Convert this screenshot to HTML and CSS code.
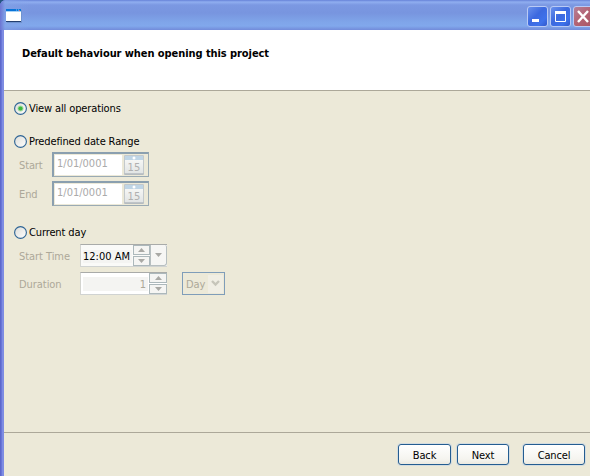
FILE: index.html
```html
<!DOCTYPE html>
<html lang="en">
<head>
<meta charset="utf-8">
<title>Project options</title>
<link rel="stylesheet" href="styles.css">
</head>
<body>
<svg class="defs" width="0" height="0" aria-hidden="true">
  <linearGradient id="dial" x1="0" y1="0" x2="1" y2="1"><stop offset="0" stop-color="#dcdcd7"/><stop offset="1" stop-color="#fff"/></linearGradient>
  <linearGradient id="page" x1="0" y1="0" x2="0" y2="1"><stop offset="0" stop-color="#fcfcfa"/><stop offset="1" stop-color="#e0e3e3"/></linearGradient>
  <symbol id="radio" viewBox="0 0 13 13"><circle cx="6.5" cy="6.5" r="5.9" fill="url(#dial)" stroke="#2f6595" stroke-width="1.15"/></symbol>
  <symbol id="calendar" viewBox="0 0 20 20">
    <path d="M.5.5h19v18.8H.5z" fill="url(#page)" stroke="#c3c9cc"/>
    <path d="M1 1h18v4H1z" fill="#bfd5e6"/><circle cx="10" cy="3" r="1.5" fill="#fff"/>
    <path d="M.5 19h19" stroke="#a2aab0"/>
  </symbol>
  <symbol id="up" viewBox="0 0 7 4"><path d="M0 4 3.5 0 7 4z" fill="#a9a9a5"/></symbol>
  <symbol id="down" viewBox="0 0 7 4"><path d="M0 0h7L3.5 4z" fill="#a9a9a5"/></symbol>
</svg>
<div class="window">
  <header class="titlebar">
    <svg class="app-icon" width="16" height="14" viewBox="0 0 16 14"><path d="M1 1h15v13H1z" fill="#6f93cf"/><path d="M0 0h15v13H0z" fill="#fff"/><path d="M0 0h15v2H0z" fill="#0874d8"/><path d="M0 2h15v1H0z" fill="#a9d2f5"/><path d="M10 1h1M12 1h1" stroke="#8bc5f5"/><path d="M13 1h1v1h-1z" fill="#c96770"/><path d="M0 12h15v1H0z" fill="#233f70"/></svg>
    <div class="controls">
      <span class="control"><svg width="19" height="19"><path d="M4 12h7v3H4z" fill="#fff"/></svg></span>
      <span class="control"><svg width="19" height="19"><path d="M4.5 5.5h10v9h-10z" fill="none" stroke="#fff"/><path d="M4 4h11v3H4z" fill="#fff"/></svg></span>
      <span class="control close"><svg width="19" height="19"><path d="m4 4 10 11M14 4 4 15" stroke="#fff" stroke-width="2.4"/></svg></span>
    </div>
  </header>
  <main class="client">
    <section class="banner"><h1>Default behaviour when opening this project</h1></section>
    <section class="options">
      <label class="choice all"><svg width="13" height="13"><use href="#radio"/><circle cx="6.5" cy="6.5" r="3" fill="#a7dda5"/><circle cx="6.5" cy="6.5" r="2.1" fill="#3cb93d"/></svg><span>View all operations</span></label>
      <label class="choice range"><svg width="13" height="13"><use href="#radio"/></svg><span>Predefined date Range</span></label>
      <div class="date-row"><span class="caption">Start</span><div class="date"><span class="date-text">1/01/0001</span><svg width="20" height="20"><use href="#calendar"/><text x="10" y="16" class="day-number">15</text></svg></div></div>
      <div class="date-row"><span class="caption">End</span><div class="date"><span class="date-text">1/01/0001</span><svg width="20" height="20"><use href="#calendar"/><text x="10" y="16" class="day-number">15</text></svg></div></div>
      <label class="choice current"><svg width="13" height="13"><use href="#radio"/></svg><span>Current day</span></label>
      <div class="field-row">
        <span class="caption wide">Start Time</span>
        <div class="spin time"><span class="time-text">12:00 AM</span><div class="steps"><i><svg width="7" height="4"><use href="#up"/></svg></i><i><svg width="7" height="4"><use href="#down"/></svg></i></div><div class="drop"><svg width="7" height="4"><use href="#down"/></svg></div></div>
      </div>
      <div class="field-row">
        <span class="caption wide">Duration</span>
        <div class="spin"><span class="amount">1</span><div class="steps wide-steps"><i><svg width="7" height="4"><use href="#up"/></svg></i><i><svg width="7" height="4"><use href="#down"/></svg></i></div></div>
        <div class="combo"><span>Day</span><b><svg width="9" height="7"><path d="m1 1 3.5 3.5L8 1" fill="none" stroke="#c6c5ba" stroke-width="2.4"/></svg></b></div>
      </div>
    </section>
    <footer class="actions"><button>Back</button><button class="next">Next</button><button class="cancel">Cancel</button></footer>
  </main>
</div>
</body>
</html>
```
FILE: styles.css
```css
* { box-sizing: border-box; }
body { margin: 0; overflow: hidden; font: 11px/13px "DejaVu Sans Condensed", "DejaVu Sans", sans-serif; color: #000; background: #245681; }
svg { display: block; flex: none; }
.defs { position: absolute; }
.window { width: 590px; height: 476px; display: flex; flex-direction: column; background: linear-gradient(90deg, #5d68cb 0 1px, #6876d8 1px 2px, #7e8ce2 2px); border-top-left-radius: 6px; overflow: hidden; }
.titlebar { height: 30px; flex: none; display: flex; align-items: flex-start; justify-content: space-between; padding: 6px 0 0 6px; overflow: hidden; background: linear-gradient(90deg, #6c74d3 0, #83a4e8a0 5px, #83a4e800 30px), linear-gradient(#6682d8 0, #90aef0 2px, #7b98e2 5px, #7895df 13px, #7fa5e9 22px, #81a8ec 26px, #728bda 30px); }
.app-icon { margin-top: 3px; }
.controls { display: flex; gap: 2px; width: 63px; }
.control { width: 21px; height: 21px; flex: none; border: 1px solid #b9caf5; border-radius: 3px; background: linear-gradient(135deg, #6a91ec, #3c69df 45%, #3e72eb 75%, #3158cb); overflow: hidden; }
.close { background: linear-gradient(135deg, #b58099, #b36373 50%, #a95665); }
.client { margin-left: 4px; flex: 1; display: flex; flex-direction: column; background: #ece9d8; }
.banner { height: 61px; background: #fff; border-bottom: 1px solid #aca899; padding: 17px 18px; }
h1 { margin: 0; font-size: 11px; line-height: 13px; font-weight: bold; letter-spacing: -.07px; white-space: nowrap; }
.options { height: 342px; border-bottom: 1px solid #aca899; padding: 10px 0 0 10px; white-space: nowrap; letter-spacing: -.12px; }
.choice { display: flex; align-items: center; gap: 2px; height: 14px; }
.range { margin-top: 19px; }
.current { margin-top: 19px; }
.date-row { display: flex; align-items: center; height: 25px; margin-top: 4px; padding-left: 5px; }
.caption { width: 33px; color: #aca899; padding-top: 1px; }
.wide { width: 61px; letter-spacing: -.05px; padding-top: 2px; }
.date { width: 97px; height: 25px; display: flex; justify-content: space-between; align-items: center; padding: 1px 4px 1px 1px; border: 1px solid #9aaab3; border-top: 2px solid #8a9faf; border-left: 2px solid #8a9faf; background: #ece9d8; }
.date-text { width: 67px; height: 20px; padding: 2px 0 0 2px; background: #fff; color: #aaa; letter-spacing: 0; }
.day-number { font-family: "DejaVu Sans", sans-serif; font-size: 10px; text-anchor: middle; fill: #b0b0b0; letter-spacing: .2px; }
.field-row { display: flex; align-items: center; height: 23px; padding-left: 5px; margin-top: 5px; }
.spin { display: flex; width: 87px; height: 23px; background: #fff; border-top: 1px solid #a9aba9; border-bottom: 1px solid #d0d3d2; border-left: 1px solid #d3d4cf; }
.time { background: #fafaf8; }
.time-text { width: 49px; height: 13px; margin: 5px 1px 0 2px; background: #f4f4f2; letter-spacing: 0; }
.steps { width: 17px; display: flex; flex-direction: column; gap: 1px; }
.steps i { display: flex; align-items: center; justify-content: center; height: 10px; border: 1px solid #acb8bb; background: #f5f5f3; }
.wide-steps { width: 18px; }
.drop { width: 17px; display: flex; align-items: center; justify-content: center; border: 1px solid #b7bfc0; border-top: 0; border-radius: 0 2px 3px 0; background: #f6f6f4; }
.amount { width: 65px; height: 14px; margin: 4px 1px 0 2px; padding: 1px 2px 0 0; text-align: right; color: #aca899; background: #f4f4f2; }
.combo { display: flex; justify-content: space-between; align-items: center; width: 43px; height: 23px; margin-left: 15px; padding: 1px 1px 1px 3px; border: 1px solid #7f9db9; color: #aca899; }
.combo span { padding-top: 1px; }
.combo b { display: flex; align-items: center; justify-content: center; width: 15px; height: 18px; background: #f0eee4; }
.actions { flex: 1; display: flex; align-items: flex-start; padding: 11px 0 0 394px; }
button { width: 53px; height: 21px; padding: 1px 0 0; font: inherit; color: #000; letter-spacing: -.15px; border: 1px solid #245d91; border-radius: 3px; background: linear-gradient(#fff, #f5f4ef 75%, #ebe9e0); box-shadow: 0 0 0 1px #d3dce0; }
.next { width: 52px; margin-left: 6px; }
.cancel { width: 62px; margin-left: 14px; }
```
